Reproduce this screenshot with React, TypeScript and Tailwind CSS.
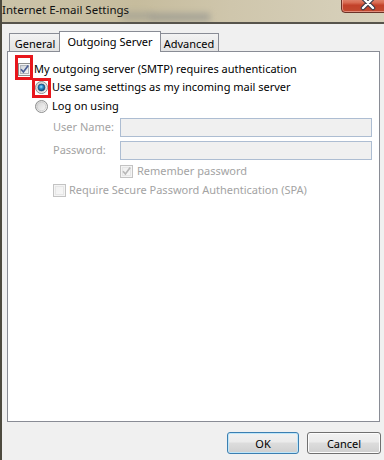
import React from "react";

const FONT = { fontFamily: '"Noto Sans", "Open Sans", Arial, sans-serif' };

function CheckBox({ checked, disabled }: { checked?: boolean; disabled?: boolean }) {
  const outer = disabled ? "#c3c3c3" : "#8e8f8f";
  const inner = disabled ? "#e6e6e6" : "#b0b5bb";
  const mark = disabled ? "#b8b8b8" : "#4a5f97";
  const id = disabled ? "cbd" : "cbn";
  return (
    <svg width="13" height="13" viewBox="0 0 13 13" className="shrink-0">
      <defs>
        <linearGradient id={id} x1="0" y1="0" x2="1" y2="1">
          <stop offset="0" stopColor={disabled ? "#f0f0f0" : "#cdd1d6"} />
          <stop offset="1" stopColor={disabled ? "#f7f7f7" : "#f8f8f8"} />
        </linearGradient>
      </defs>
      <rect x="0.5" y="0.5" width="12" height="12" fill="#f4f4f4" stroke={outer} />
      <rect x="2.5" y="2.5" width="8" height="8" fill={`url(#${id})`} stroke={inner} />
      {checked && <path d="M3 6.2 L5.4 9 L10.2 2.6" fill="none" stroke={mark} strokeWidth="1.7" />}
    </svg>
  );
}

function Radio({ checked }: { checked?: boolean }) {
  return (
    <svg width="13" height="13" viewBox="0 0 13 13" className="shrink-0">
      <defs>
        <linearGradient id="rg" x1="0" y1="0" x2="1" y2="1">
          <stop offset="0" stopColor="#cfcfcf" />
          <stop offset="1" stopColor="#fdfdfd" />
        </linearGradient>
        <radialGradient id="rs" cx="0.45" cy="0.4" r="0.6">
          <stop offset="0" stopColor="#9be3ff" />
          <stop offset="0.45" stopColor="#2a8ccc" />
          <stop offset="1" stopColor="#0f3f6d" />
        </radialGradient>
      </defs>
      <circle cx="6.5" cy="6.5" r="6" fill="url(#rg)" stroke="#8e8f8f" />
      <circle cx="6.5" cy="6.5" r="4.3" fill="none" stroke="#c9c9c9" strokeWidth="0.8" />
      {checked && <circle cx="6.5" cy="6.5" r="3.4" fill="url(#rs)" stroke="#1c4c7c" strokeWidth="0.8" />}
    </svg>
  );
}

export default function App() {
  return (
    <div
      className="relative w-[384px] h-[460px] overflow-hidden bg-[#f0f0f0] text-[11px] text-black border-l-2 border-l-[#4d4a3f]"
      style={FONT}
    >
      {/* Title bar */}
      <div className="relative h-[24px] bg-[linear-gradient(90deg,#cbc3a9_0%,#c6bc9d_35%,#cfc6ac_60%,#d8d2bd_100%)] border-b-2 border-b-[#57544c] overflow-hidden">
        <div className="absolute left-[120px] top-[12px] w-[30px] h-[8px] bg-[#9a9a90] opacity-60 blur-[3px]" />
        <div className="absolute left-[148px] top-[13px] w-[60px] h-[8px] bg-[#8d8f8c] opacity-60 blur-[3px]" />
        <div className="absolute left-[0px] top-[1px] leading-[18px] text-[11.5px] text-[#111]">Internet E-mail Settings</div>
        {/* close button */}
        <div className="absolute left-[339px] top-[-6px] w-[60px] h-[19px] rounded-[4px] border border-[#6b3227] bg-[linear-gradient(180deg,#e9a593_0%,#d86b52_45%,#c2412a_60%,#c24a30_100%)] shadow-[inset_0_0_0_1px_rgba(255,210,200,0.5)]">
          <svg width="16" height="14" viewBox="0 0 16 14" className="absolute left-[18px] top-[2px]">
            <path d="M3 1 L13 11 M13 1 L3 11" stroke="#3a3a48" strokeWidth="4.5" strokeLinecap="round" />
            <path d="M3 1 L13 11 M13 1 L3 11" stroke="#ffffff" strokeWidth="2.4" strokeLinecap="round" />
          </svg>
        </div>
      </div>

      {/* Tabs */}
      <div className="flex items-end h-[20px] mt-[7px] ml-[7px]">
        <div className="w-[52px] h-[18px] border border-b-0 border-[#898c95] bg-[linear-gradient(180deg,#f3f3f3,#e3e3e3)] flex items-center justify-center leading-none pt-[2px]">
          General
        </div>
        <div className="relative z-10 -ml-[2px] -mb-[1px] w-[102px] h-[21px] border border-b-0 border-[#898c95] bg-white flex items-start justify-center leading-none pt-[4px]">
          Outgoing Server
        </div>
        <div className="-ml-[2px] w-[60px] h-[18px] border border-b-0 border-[#898c95] bg-[linear-gradient(180deg,#f3f3f3,#e3e3e3)] flex items-center justify-center leading-none pt-[2px]">
          Advanced
        </div>
      </div>

      {/* Panel */}
      <div className="relative ml-[5px] mr-[4px] h-[371px] border border-[#898c95] bg-white flex flex-col">
        <div className="flex items-center h-[18px] mt-[8px] pl-[10px] gap-[3px]">
          <CheckBox checked />
          <span>My outgoing server (SMTP) requires authentication</span>
        </div>
        <div className="flex items-center h-[18px] pl-[27px] gap-[4px]">
          <Radio checked />
          <span>Use same settings as my incoming mail server</span>
        </div>
        <div className="flex items-center h-[18px] mt-[1px] pl-[27px] gap-[4px]">
          <Radio />
          <span>Log on using</span>
        </div>
        <div className="flex items-center h-[19px] mt-[3px] pl-[45px]">
          <span className="w-[67px] text-[#a3a3a3]">User Name:</span>
          <div className="w-[252px] h-[19px] border border-[#adbdd2] bg-[#f0f0f0]" />
        </div>
        <div className="flex items-center h-[19px] mt-[4px] pl-[45px]">
          <span className="w-[67px] text-[#a3a3a3]">Password:</span>
          <div className="w-[252px] h-[19px] border border-[#adbdd2] bg-[#f0f0f0]" />
        </div>
        <div className="flex items-center h-[18px] mt-[2px] pl-[112px] gap-[4px]">
          <CheckBox checked disabled />
          <span className="text-[#a3a3a3]">Remember password</span>
        </div>
        <div className="flex items-center h-[18px] mt-[1px] pl-[45px] gap-[3px]">
          <CheckBox disabled />
          <span className="text-[#a3a3a3]">Require Secure Password Authentication (SPA)</span>
        </div>

        {/* red annotation boxes */}
        <div className="absolute left-[7px] top-[3px] w-[18px] h-[25px] border-[3px] border-[#e8161c]" />
        <div className="absolute left-[24px] top-[26px] w-[19px] h-[20px] border-[3px] border-[#e8161c]" />
      </div>

      {/* Buttons */}
      <div className="flex justify-end gap-[8px] mt-[10px] mr-[3px]">
        <button className="w-[72px] h-[22px] rounded-[3px] border border-[#3c7fb1] bg-[linear-gradient(180deg,#f2f2f2_0%,#ebebeb_45%,#dddddd_50%,#cfcfcf_100%)] shadow-[inset_0_0_0_1px_#bfe6f9] text-[11px] leading-none">
          OK
        </button>
        <button className="w-[74px] h-[22px] rounded-[3px] border border-[#707070] bg-[linear-gradient(180deg,#f2f2f2_0%,#ebebeb_45%,#dddddd_50%,#cfcfcf_100%)] shadow-[inset_0_0_0_1px_#fcfcfc] text-[11px] leading-none">
          Cancel
        </button>
      </div>
    </div>
  );
}
